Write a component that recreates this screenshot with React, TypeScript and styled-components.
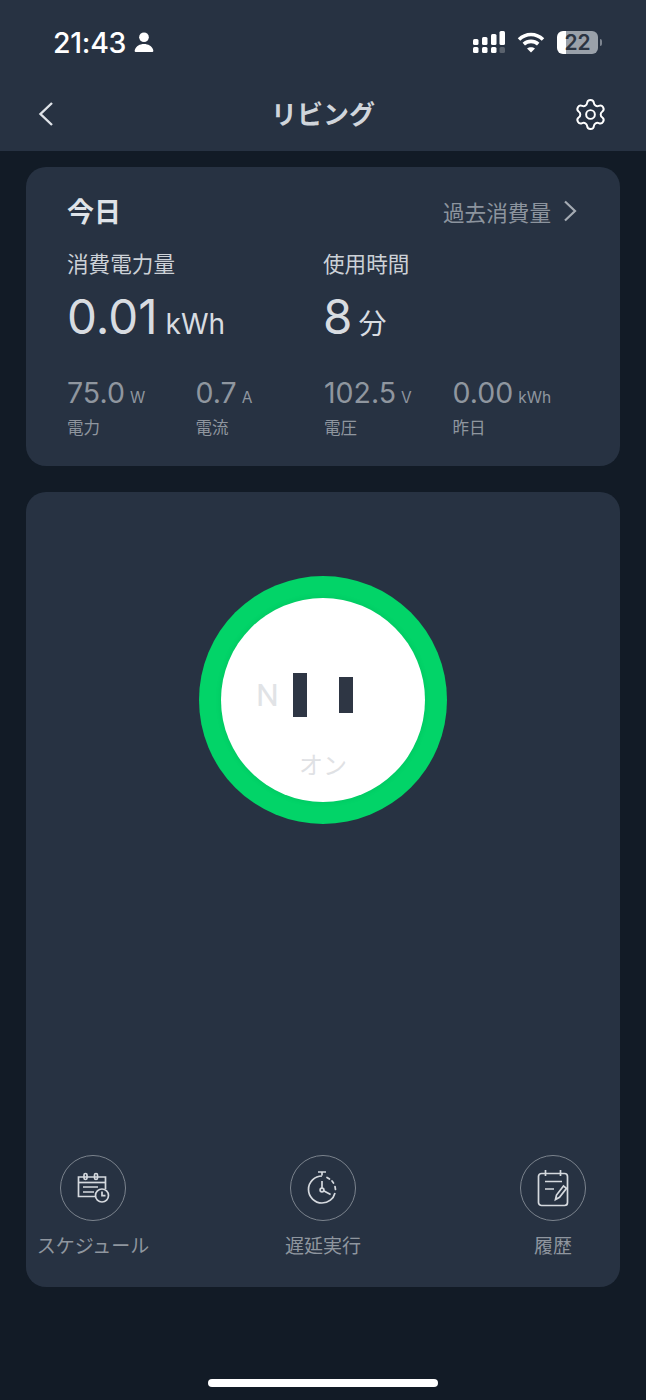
import React from "react";
import styled, { createGlobalStyle } from "styled-components";
import { Settings } from "lucide-react";

const GlobalStyle = createGlobalStyle`
  html, body {
    margin: 0;
    padding: 0;
    background: #121b26;
  }
  * {
    box-sizing: border-box;
  }
`;

const font = `"Inter", "Noto Sans CJK JP", sans-serif`;

const Page = styled.div`
  width: 646px;
  height: 1400px;
  overflow: hidden;
  display: flex;
  flex-direction: column;
  position: relative;
  background: #121b26;
  font-family: ${font};
`;

const Header = styled.header`
  height: 151px;
  flex-shrink: 0;
  background: #273242;
  display: flex;
  flex-direction: column;
`;

const StatusBar = styled.div`
  height: 82px;
  padding: 2px 48px 0 53px;
  display: flex;
  align-items: center;
  justify-content: space-between;
`;

const Clock = styled.div`
  display: flex;
  align-items: center;
  gap: 8px;
  color: #fff;
  font-size: 28.5px;
  font-weight: 500;
  letter-spacing: -0.3px;
`;

const StatusIcons = styled.div`
  display: flex;
  align-items: center;
  gap: 12px;
`;

const Battery = styled.div`
  position: relative;
  width: 41px;
  height: 23px;
  border-radius: 6px;
  background: linear-gradient(90deg, #fff 0 22%, #9aa1aa 22% 100%);
  color: #2b3442;
  font-size: 21px;
  font-weight: 600;
  line-height: 23px;
  text-align: center;
  &::after {
    content: "";
    position: absolute;
    right: -4px;
    top: 8px;
    width: 2px;
    height: 7px;
    border-radius: 0 2px 2px 0;
    background: #7d8590;
  }
`;

const NavBar = styled.div`
  height: 69px;
  padding: 0 38px 5px;
  display: flex;
  align-items: center;
  justify-content: space-between;
`;

const NavSlot = styled.div<{ $end?: boolean }>`
  width: 50px;
  display: flex;
  align-items: center;
  justify-content: ${(p) => (p.$end ? "flex-end" : "flex-start")};
`;

const Title = styled.div`
  color: #d0d5db;
  font-size: 26px;
  font-weight: 700;
  margin-top: -4px;
`;

const Cards = styled.main`
  flex: 1;
  padding: 16px 26px 0;
  display: flex;
  flex-direction: column;
  gap: 26px;
`;

const Card = styled.section`
  background: #273242;
  border-radius: 20px;
`;

const TodayCard = styled(Card)`
  height: 299px;
  padding: 26px 41px 0;
`;

const TodayHead = styled.div`
  display: flex;
  justify-content: space-between;
  align-items: center;
  height: 36px;
`;

const TodayTitle = styled.div`
  color: #dfe3e8;
  font-size: 27px;
  font-weight: 700;
  margin-top: -2px;
`;

const HistoryLink = styled.div`
  display: flex;
  align-items: center;
  gap: 12px;
  color: #8c949e;
  font-size: 21.6px;
  padding-right: 2px;
`;

const TwoCols = styled.div`
  display: grid;
  grid-template-columns: 256px 1fr;
  margin-top: 20px;
`;

const MainLabel = styled.div`
  color: #ccd1d7;
  font-size: 21.6px;
  line-height: 30px;
`;

const MainValue = styled.div`
  margin-top: 7px;
  display: flex;
  align-items: baseline;
  gap: 8px;
  color: #d8dce1;
  height: 62px;
`;

const BigNumber = styled.span`
  font-size: 47.5px;
  font-weight: 400;
  line-height: 62px;
`;

const BigUnit = styled.span<{ $tight?: boolean }>`
  font-size: 28px;
  margin-left: ${(p) => (p.$tight ? "-2px" : "0")};
`;

const StatRow = styled.div`
  display: grid;
  grid-template-columns: repeat(4, 128.5px);
  margin-top: 27px;
`;

const Stat = styled.div`
  display: flex;
  flex-direction: column;
`;

const StatValue = styled.div`
  display: flex;
  align-items: baseline;
  gap: 5px;
  color: #8f969f;
  line-height: 36px;
`;

const StatNumber = styled.span`
  font-size: 28.5px;
`;

const StatUnit = styled.span`
  font-size: 15.5px;
`;

const StatLabel = styled.div`
  color: #8f969f;
  font-size: 16.5px;
  line-height: 24px;
`;

const SwitchCard = styled(Card)`
  height: 795px;
  display: flex;
  flex-direction: column;
  justify-content: space-between;
  align-items: stretch;
  padding-top: 84px;
`;

const Ring = styled.div`
  align-self: center;
  width: 248px;
  height: 248px;
  border-radius: 50%;
  background: #02d468;
  display: flex;
  align-items: center;
  justify-content: center;
`;

const Face = styled.div`
  position: relative;
  width: 204px;
  height: 204px;
  border-radius: 50%;
  background: #fff;
  box-shadow: 0 0 6px rgba(0, 0, 0, 0.08);
  display: flex;
  align-items: center;
  justify-content: center;
  gap: 32px;
  padding-bottom: 10px;
`;

const Slot = styled.div<{ $h: number }>`
  width: 14px;
  height: ${(p) => p.$h}px;
  background: #2e3644;
`;

const FaceN = styled.span`
  position: absolute;
  left: 35px;
  top: 79px;
  color: #e1e3e6;
  font-family: "Roboto", sans-serif;
  font-size: 32px;
  line-height: 36px;
`;

const FaceState = styled.span`
  position: absolute;
  left: 0;
  right: 0;
  top: 153px;
  text-align: center;
  color: #dfe1e4;
  font-size: 24px;
  line-height: 30px;
`;

const Actions = styled.div`
  display: grid;
  grid-template-columns: 134px 1fr 134px;
  padding: 0 0 26px;
`;

const Action = styled.div`
  display: flex;
  flex-direction: column;
  align-items: center;
  gap: 12px;
`;

const ActionCircle = styled.div`
  width: 66px;
  height: 66px;
  border-radius: 50%;
  border: 1.5px solid #7b838d;
  display: flex;
  align-items: center;
  justify-content: center;
`;

const ActionLabel = styled.div`
  color: #8f969f;
  font-size: 19px;
  line-height: 28px;
  white-space: nowrap;
`;

const HomeBar = styled.div`
  position: absolute;
  left: 208px;
  bottom: 13px;
  width: 230px;
  height: 8px;
  border-radius: 4px;
  background: #fff;
`;

function PersonIcon() {
  return (
    <svg width="20" height="21" viewBox="0 0 18 20" fill="#fff">
      <circle cx="9" cy="5" r="4.6" />
      <path d="M1 19c-1 0-1-1-.7-2C1.500 13.500 5 11.500 9 11.500s7.500 2 8.700 5.500c.3 1 .3 2-.7 2z" />
    </svg>
  );
}

function SignalIcon() {
  return (
    <svg width="32" height="22" viewBox="0 0 32 22" fill="#fff">
      <rect x="0" y="8" width="5.500" height="6" rx="1.500" />
      <rect x="9" y="6" width="5.500" height="8" rx="1.500" />
      <rect x="18" y="3" width="5.500" height="11" rx="1.500" />
      <rect x="26.500" y="0" width="5.500" height="14" rx="1.500" />
      <rect x="0" y="16" width="5.500" height="6" rx="1.500" />
      <rect x="9" y="16" width="5.500" height="6" rx="1.500" />
      <rect x="18" y="16" width="5.500" height="6" rx="1.500" />
      <rect x="26.500" y="16" width="5.500" height="6" rx="1.500" fill="#5a626d" />
    </svg>
  );
}

function WifiIcon() {
  return (
    <svg width="28" height="21" viewBox="0 0 28 21" fill="none" stroke="#fff" strokeWidth="3.600">
      <path d="M2 7.500C9 .8 19 .8 26 7.500" />
      <path d="M6.800 12.200c4.200-3.800 10.200-3.800 14.400 0" />
      <path d="M14 20.500l-4-4c2.300-1.800 5.700-1.800 8 0z" fill="#fff" stroke="none" />
    </svg>
  );
}

function BackIcon() {
  return (
    <svg width="16" height="26" viewBox="0 0 16 26" fill="none" stroke="#dfe3e8" strokeWidth="2.400">
      <path d="M14 2L2.500 13 14 24" />
    </svg>
  );
}

function ChevronIcon() {
  return (
    <svg width="14" height="22" viewBox="0 0 14 22" fill="none" stroke="#a5abb3" strokeWidth="2.200">
      <path d="M2 1.500L12 11 2 20.500" />
    </svg>
  );
}

function ScheduleIcon() {
  return (
    <svg width="34" height="32" viewBox="0 0 34 32" fill="none" stroke="#d5d9de" strokeWidth="1.700">
      <path d="M19 24.500H2.500V5h27v12" />
      <path d="M2.500 10.500h27" />
      <rect x="8" y="1.500" width="3" height="6" rx="1.500" />
      <rect x="18.500" y="1.500" width="3" height="6" rx="1.500" />
      <path d="M7 15h15M7 20h11" />
      <circle cx="26" cy="23.500" r="6.500" />
      <path d="M26 19.500v4.200h3.500" />
    </svg>
  );
}

function TimerIcon() {
  return (
    <svg width="34" height="36" viewBox="0 0 34 36" fill="none" stroke="#d5d9de" strokeWidth="1.700">
      <path d="M12 2h8M16 2v3.500" />
      <path d="M16 6C8.800 6 2.500 12 2.500 19.500S8.800 33 16 33c6.500 0 11.500-4.200 13-10" />
      <path d="M21 7.500l2.500 1.500M26 11l1.500 2M29 16.500l.5 3" strokeLinecap="round" />
      <path d="M16 11v7M17.600 20.800l7 3.700" />
      <circle cx="16" cy="20" r="1.900" />
    </svg>
  );
}

function HistoryIcon() {
  return (
    <svg width="32" height="38" viewBox="0 0 32 38" fill="none" stroke="#d5d9de" strokeWidth="1.700">
      <rect x="1.500" y="4.500" width="29" height="32" rx="3" />
      <path d="M8.500 1v6M23.500 1v6" />
      <path d="M8 12.500h17M8 20h9" />
      <path d="M18.500 30.500l1-4.500 7-9 3 2.300-7 9z" />
    </svg>
  );
}

const stats = [
  { value: "75.0", unit: "W", label: "電力" },
  { value: "0.7", unit: "A", label: "電流" },
  { value: "102.5", unit: "V", label: "電圧" },
  { value: "0.00", unit: "kWh", label: "昨日" },
];

export default function App() {
  return (
    <Page>
      <GlobalStyle />
      <Header>
        <StatusBar>
          <Clock>
            21:43
            <PersonIcon />
          </Clock>
          <StatusIcons>
            <SignalIcon />
            <WifiIcon />
            <Battery>22</Battery>
          </StatusIcons>
        </StatusBar>
        <NavBar>
          <NavSlot>
            <BackIcon />
          </NavSlot>
          <Title>リビング</Title>
          <NavSlot $end>
            <Settings size={35} strokeWidth={1.35} color="#fff" />
          </NavSlot>
        </NavBar>
      </Header>
      <Cards>
        <TodayCard>
          <TodayHead>
            <TodayTitle>今日</TodayTitle>
            <HistoryLink>
              過去消費量
              <ChevronIcon />
            </HistoryLink>
          </TodayHead>
          <TwoCols>
            <div>
              <MainLabel>消費電力量</MainLabel>
              <MainValue>
                <BigNumber>0.01</BigNumber>
                <BigUnit>kWh</BigUnit>
              </MainValue>
            </div>
            <div>
              <MainLabel>使用時間</MainLabel>
              <MainValue>
                <BigNumber>8</BigNumber>
                <BigUnit $tight>分</BigUnit>
              </MainValue>
            </div>
          </TwoCols>
          <StatRow>
            {stats.map((s) => (
              <Stat key={s.label}>
                <StatValue>
                  <StatNumber>{s.value}</StatNumber>
                  <StatUnit>{s.unit}</StatUnit>
                </StatValue>
                <StatLabel>{s.label}</StatLabel>
              </Stat>
            ))}
          </StatRow>
        </TodayCard>
        <SwitchCard>
          <Ring>
            <Face>
              <FaceN>N</FaceN>
              <Slot $h={44} />
              <Slot $h={36} />
              <FaceState>オン</FaceState>
            </Face>
          </Ring>
          <Actions>
            <Action>
              <ActionCircle>
                <ScheduleIcon />
              </ActionCircle>
              <ActionLabel>スケジュール</ActionLabel>
            </Action>
            <Action>
              <ActionCircle>
                <TimerIcon />
              </ActionCircle>
              <ActionLabel>遅延実行</ActionLabel>
            </Action>
            <Action>
              <ActionCircle>
                <HistoryIcon />
              </ActionCircle>
              <ActionLabel>履歴</ActionLabel>
            </Action>
          </Actions>
        </SwitchCard>
      </Cards>
      <HomeBar />
    </Page>
  );
}
